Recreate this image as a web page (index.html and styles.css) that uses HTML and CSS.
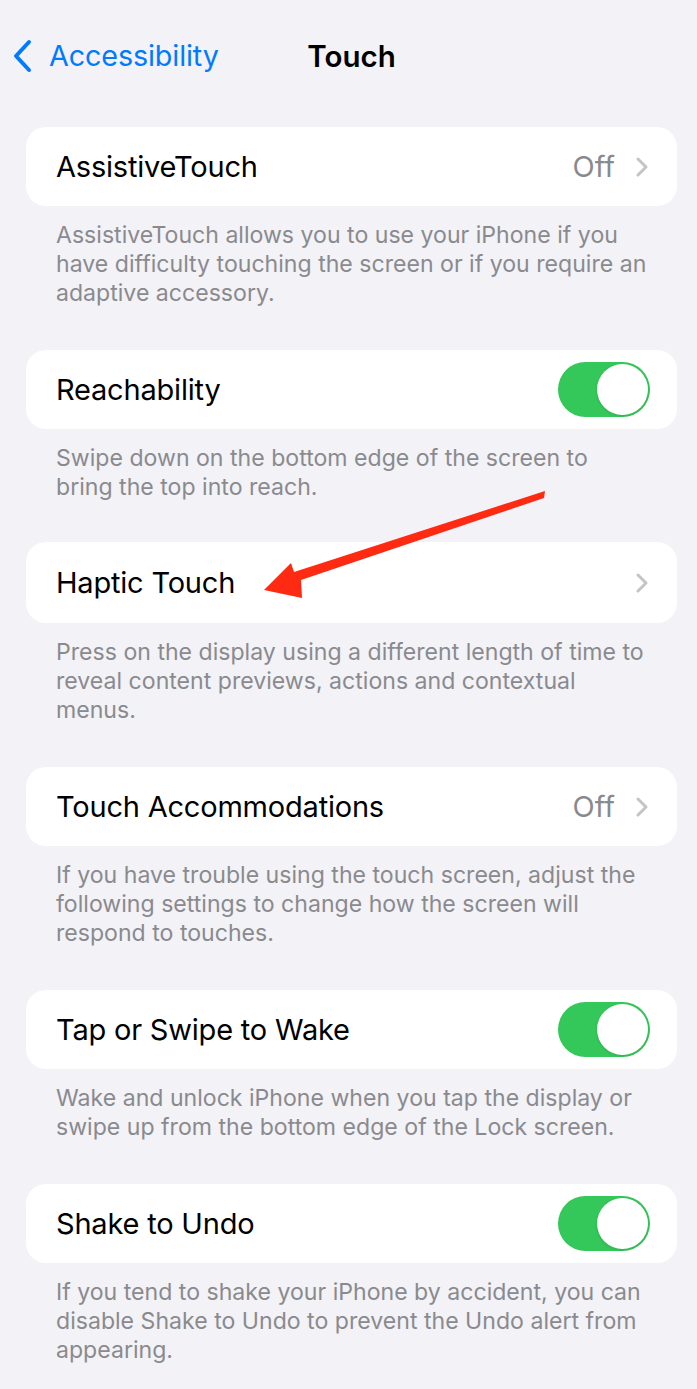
FILE: index.html
```html
<!DOCTYPE html>
<html>
<head>
<meta charset="utf-8">
<link rel="stylesheet" href="styles.css">
</head>
<body>
<div class="page">
  <header class="nav">
    <div class="back">
      <svg class="back-icon" width="22" height="34" viewBox="0 0 22 34"><path d="M17 3 L4 17 L17 31" fill="none" stroke="#007aff" stroke-width="4" stroke-linecap="round" stroke-linejoin="round"/></svg>
      <span class="back-label">Accessibility</span>
    </div>
    <div class="title">Touch</div>
    <div></div>
  </header>

  <section class="group">
    <div class="card">
      <span class="label">AssistiveTouch</span>
      <span class="detail">Off</span>
      <svg class="chev" width="14" height="22" viewBox="0 0 14 22"><path d="M3 3 L11 11 L3 19" fill="none" stroke="#c4c4c6" stroke-width="3" stroke-linecap="round" stroke-linejoin="round"/></svg>
    </div>
    <p class="foot">AssistiveTouch allows you to use your iPhone if you have difficulty touching the screen or if you require an adaptive accessory.</p>
  </section>

  <section class="group">
    <div class="card">
      <span class="label">Reachability</span>
      <span class="toggle"><span class="knob"></span></span>
    </div>
    <p class="foot">Swipe down on the bottom edge of the screen to bring the top into reach.</p>
  </section>

  <section class="group group-shift">
    <div class="card card-tall">
      <span class="label">Haptic Touch</span>
      <svg class="chev" width="14" height="22" viewBox="0 0 14 22"><path d="M3 3 L11 11 L3 19" fill="none" stroke="#c4c4c6" stroke-width="3" stroke-linecap="round" stroke-linejoin="round"/></svg>
    </div>
    <p class="foot">Press on the display using a different length of time to reveal content previews, actions and contextual menus.</p>
  </section>

  <section class="group">
    <div class="card">
      <span class="label">Touch Accommodations</span>
      <span class="detail">Off</span>
      <svg class="chev" width="14" height="22" viewBox="0 0 14 22"><path d="M3 3 L11 11 L3 19" fill="none" stroke="#c4c4c6" stroke-width="3" stroke-linecap="round" stroke-linejoin="round"/></svg>
    </div>
    <p class="foot">If you have trouble using the touch screen, adjust the following settings to change how the screen will respond to touches.</p>
  </section>

  <section class="group">
    <div class="card">
      <span class="label">Tap or Swipe to Wake</span>
      <span class="toggle"><span class="knob"></span></span>
    </div>
    <p class="foot">Wake and unlock iPhone when you tap the display or swipe up from the bottom edge of the Lock screen.</p>
  </section>

  <section class="group">
    <div class="card">
      <span class="label">Shake to Undo</span>
      <span class="toggle"><span class="knob"></span></span>
    </div>
    <p class="foot">If you tend to shake your iPhone by accident, you can disable Shake to Undo to prevent the Undo alert from appearing.</p>
  </section>

  <svg class="arrow" width="697" height="1389" viewBox="0 0 697 1389">
    <path d="M545 491 L544 498 L301 580 L302 598 L264 590 L291 563 L294 572 Z" fill="#ff2a12"/>
  </svg>
</div>
</body>
</html>
```

FILE: styles.css
```css
* { box-sizing: border-box; }
html, body { margin: 0; padding: 0; }
body {
  background: #f2f2f7;
  font-family: Inter, "Noto Sans", "Liberation Sans", sans-serif;
  width: 697px;
  height: 1389px;
  overflow: hidden;
}
.page {
  position: relative;
  width: 697px;
  height: 1389px;
}
.nav {
  height: 127px;
  display: grid;
  grid-template-columns: 1fr auto 1fr;
  align-items: start;
  padding-top: 38px;
}
.back {
  display: flex;
  align-items: center;
  padding-left: 12px;
  color: #007aff;
}
.back-icon { display: block; }
.back-label {
  font-size: 28.7px;
  margin-left: 15px;
  letter-spacing: -0.1px;
  line-height: 36px;
}
.title {
  font-size: 29.5px;
  font-weight: 600;
  line-height: 36px;
  color: #000;
  padding-left: 6px;
}
.group {
  margin: 0 20px 0 26px;
}
.group-shift { margin-top: -2px; }
.card {
  background: #fff;
  border-radius: 20px;
  height: 79px;
  display: flex;
  align-items: center;
  padding: 0 28px 0 30px;
}
.card-tall { height: 81px; }
.label {
  font-size: 29px;
  line-height: 36px;
  padding-top: 1px;
  color: #000;
  flex: 1;
  letter-spacing: -0.2px;
}
.detail {
  font-size: 29px;
  line-height: 36px;
  padding-top: 1px;
  color: #8a8a8e;
  margin-right: 20px;
}
.chev { display: block; margin-right: 0; }
.toggle {
  width: 92px;
  height: 55px;
  border-radius: 28px;
  background: #34c759;
  display: flex;
  align-items: center;
  justify-content: flex-end;
  padding: 0 2px;
  margin-right: -1px;
}
.knob {
  width: 51px;
  height: 51px;
  border-radius: 50%;
  background: #fff;
  box-shadow: 0 1px 3px rgba(0,0,0,0.12);
}
.foot {
  margin: 15px 0 0 0;
  padding: 0 29px 42px 30px;
  font-size: 23.1px;
  line-height: 29px;
  color: #8a8a8e;
}
.arrow {
  position: absolute;
  left: 0;
  top: 0;
  pointer-events: none;
}
```
